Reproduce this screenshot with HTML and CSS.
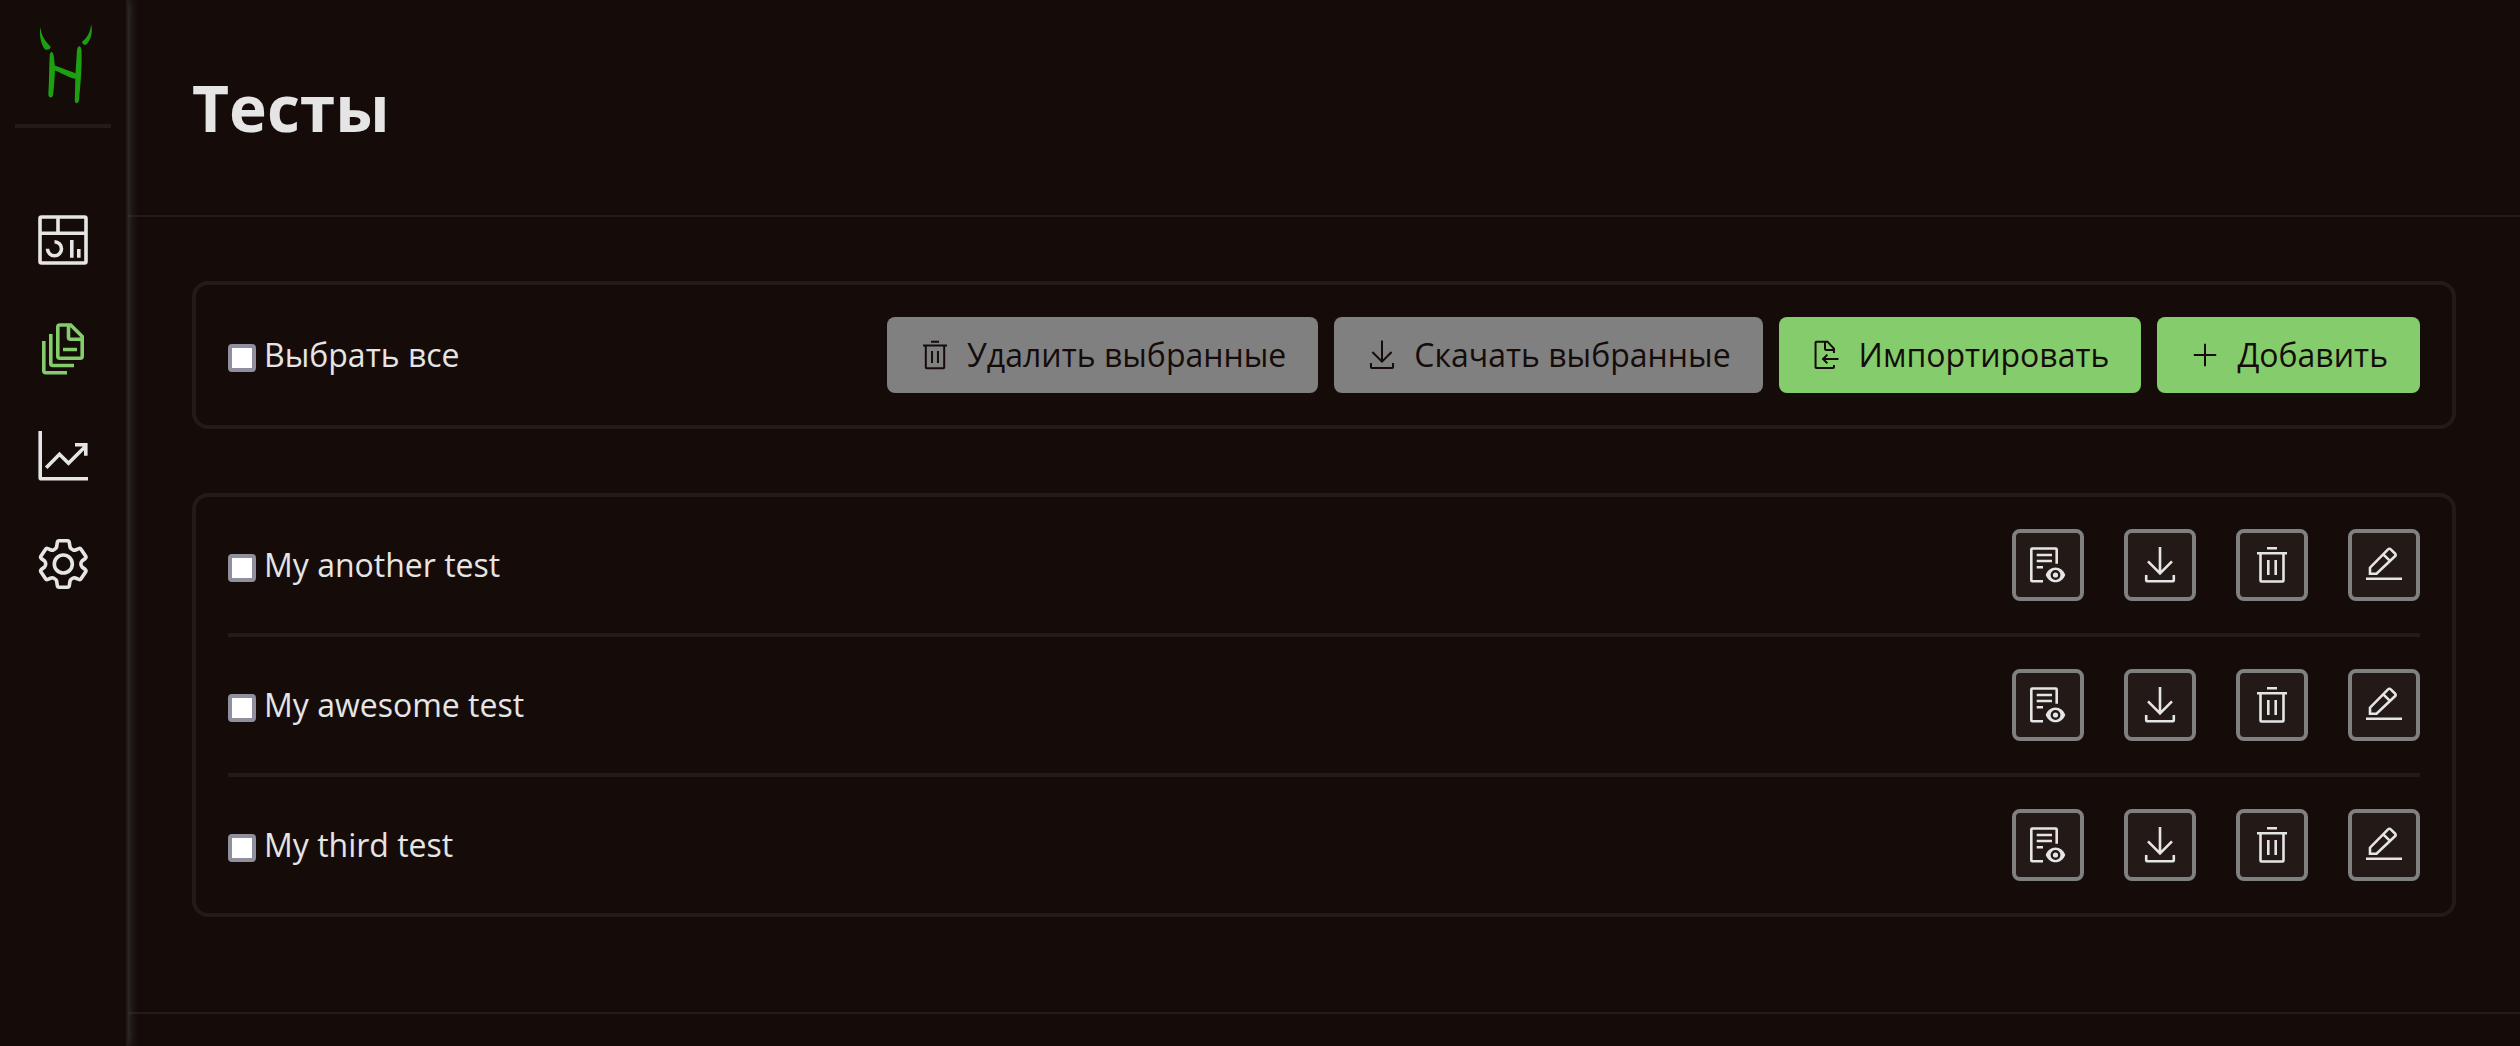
FILE: index.html
```html
<!DOCTYPE html>
<html lang="ru">
<head>
<meta charset="utf-8">
<title>Тесты</title>
<link rel="stylesheet" href="styles.css">
</head>
<body>
<svg class="sprite" aria-hidden="true">
  <symbol id="trash" viewBox="0 0 40 40"><path d="M15 3.3H25M5 8.2H35M8.5 8.2V35.5a1 1 0 0 0 1 1H30.500a1 1 0 0 0 1-1V8.200M16.300 15V30M23.700 15V30"/></symbol>
  <symbol id="download" viewBox="0 0 40 40"><path d="M20 2V28.300M8 16.300L20 28.300L32 16.300M6.200 30V35.300a1 1 0 0 0 1 1H32.800a1 1 0 0 0 1-1V30"/></symbol>
  <symbol id="preview" viewBox="0 0 40 40"><path d="M28.700 18.700V4.500a1 1 0 0 0-1-1H4.300a1 1 0 0 0-1 1V35.300a1 1 0 0 0 1 1H15M8.700 10H24M8.700 16H24M8.700 22.300H15"/><path class="solid" fill-rule="evenodd" d="M17.700 30C19.500 25.500 23 22.600 27.500 22.600S35.500 25.500 37.300 30C35.500 34.500 32 37.300 27.500 37.300S19.500 34.500 17.700 30ZM27.500 25.100a4.900 4.900 0 1 0 0 9.800a4.900 4.900 0 1 0 0-9.800Z"/><circle class="solid" cx="27.500" cy="30" r="2.600"/></symbol>
  <symbol id="edit" viewBox="0 0 40 40"><path d="M2 33.700H38M6 28.700V22.700L24.300 4.200a1.500 1.500 0 0 1 2.200 0L31.200 8.800a1.500 1.500 0 0 1 0 2.200L12.500 28.700ZM19.300 9.300L25.700 15.700"/></symbol>
  <symbol id="import" viewBox="0 0 40 40"><path d="M28.700 17.500V12L20.600 3.300H6.700a1 1 0 0 0-1 1V35.200a1 1 0 0 0 1 1H27.700a1 1 0 0 0 1-1V32.500M17.500 3.300V12.600a1 1 0 0 0 1 1H28.700M34.400 25H15M20.500 19.500L15 25L20.500 30.500"/></symbol>
  <symbol id="plus" viewBox="0 0 40 40"><path d="M20 6V34M6 20H34"/></symbol>
</svg>

<aside class="sidebar">
  <a class="logo" href="#" aria-label="На главную">
    <svg viewBox="31 16 64 96">
      <path d="M40.500 27C41 36 46 42 50.500 46.500C51 49 49 50 45 49.500C42 46 38.500 36 40.500 27Z"/>
      <path d="M91.300 24.500C89.500 34 87 38 82.200 41.500C82 44 84 45.500 86.500 44.500C91.500 39 92.500 32 91.300 24.500Z"/>
      <path d="M52 52C54 53 54.200 60 54.800 65.500L75.500 73.200L77 50C77.800 45 81 45 81.500 50C82.300 66 80.500 84 79 100C78 104.500 74.500 104 74.800 100L75.300 78.800C68 77.500 62 73 55 70.500C54.500 80 54 88 53 95.500C52 98.500 48.500 98 48.300 94.500C49.300 81 49 70 49.700 56C49.800 53 50.500 52 52 52Z"/>
    </svg>
  </a>
  <nav class="menu">
    <a href="#" aria-label="Панель"><svg viewBox="0 0 60 60"><rect x="7" y="7" width="46" height="46" rx="1.500"/><path d="M7 23.300H53M25 7V23.300M21.500 31.700A7 7 0 1 1 14.500 38.700M38.800 30V47.700M45.800 39V47.700"/></svg></a>
    <a class="current" href="#" aria-label="Тесты"><svg viewBox="0 0 60 60"><path d="M37.700 7H26.800a2 2 0 0 0-2 2V38.200a2 2 0 0 0 2 2H47.200a2 2 0 0 0 2-2V18.500ZM35.500 7V19.200a2 2 0 0 0 2 2H49.200M30 31.500H44M17.800 16V45.500a2 2 0 0 0 2 2H41M10.800 23V52.800a2 2 0 0 0 2 2H34"/></svg></a>
    <a href="#" aria-label="Статистика"><svg viewBox="0 0 60 60"><path d="M7.200 5V51.800a1 1 0 0 0 1 1H55M13.200 41.700L26.500 28.300L35.500 37.300L52.800 20M42 18.800H52.800V29.700"/></svg></a>
    <a href="#" aria-label="Настройки"><svg viewBox="0 0 60 60"><circle cx="30.300" cy="30" r="9"/><path d="M26.200 6.700H34.400Q36 6.700 36.300 8.500L37 13Q37.300 14.300 38.600 15L40.200 16Q41.200 16.600 42.500 16L45.800 14.600Q47.300 14 48.200 15.500L52.700 22.200Q53.400 23.500 52.300 24.500L49 27Q47.900 28 47.900 30T49 33L52.300 35.500Q53.400 36.500 52.700 37.800L48.200 44.500Q47.300 46 45.800 45.400L42.500 44Q41.200 43.400 40.200 44L38.600 45Q37.300 45.700 37 47L36.300 51.500Q36 53.300 34.400 53.300H26.200Q24.600 53.300 24.300 51.500L23.600 47Q23.300 45.700 22 45L20.400 44Q19.400 43.400 18.100 44L14.800 45.400Q13.300 46 12.400 44.500L7.900 37.800Q7.200 36.500 8.300 35.500L11.600 33Q12.700 32 12.700 30T11.600 27L8.300 24.500Q7.200 23.500 7.900 22.200L12.400 15.500Q13.300 14 14.800 14.600L18.100 16Q19.400 16.600 20.400 16L22 15Q23.300 14.300 23.600 13L24.300 8.500Q24.600 6.700 26.200 6.700Z"/></svg></a>
  </nav>
</aside>

<div class="page">
  <header class="header"><h1>Тесты</h1></header>
  <main class="content">
    <section class="card toolbar">
      <label class="check"><input type="checkbox">Выбрать все</label>
      <div class="buttons">
        <button class="button" type="button" disabled><svg><use href="#trash"/></svg>Удалить выбранные</button>
        <button class="button" type="button" disabled><svg><use href="#download"/></svg>Скачать выбранные</button>
        <button class="button" type="button"><svg><use href="#import"/></svg>Импортировать</button>
        <button class="button" type="button"><svg><use href="#plus"/></svg>Добавить</button>
      </div>
    </section>
    <ul class="card tests">
      <li class="test">
        <label class="check"><input type="checkbox">My another test</label>
        <div class="actions">
          <button class="action" type="button" aria-label="Просмотр"><svg><use href="#preview"/></svg></button>
          <button class="action" type="button" aria-label="Скачать"><svg><use href="#download"/></svg></button>
          <button class="action" type="button" aria-label="Удалить"><svg><use href="#trash"/></svg></button>
          <button class="action" type="button" aria-label="Изменить"><svg><use href="#edit"/></svg></button>
        </div>
      </li>
      <li class="test">
        <label class="check"><input type="checkbox">My awesome test</label>
        <div class="actions">
          <button class="action" type="button" aria-label="Просмотр"><svg><use href="#preview"/></svg></button>
          <button class="action" type="button" aria-label="Скачать"><svg><use href="#download"/></svg></button>
          <button class="action" type="button" aria-label="Удалить"><svg><use href="#trash"/></svg></button>
          <button class="action" type="button" aria-label="Изменить"><svg><use href="#edit"/></svg></button>
        </div>
      </li>
      <li class="test">
        <label class="check"><input type="checkbox">My third test</label>
        <div class="actions">
          <button class="action" type="button" aria-label="Просмотр"><svg><use href="#preview"/></svg></button>
          <button class="action" type="button" aria-label="Скачать"><svg><use href="#download"/></svg></button>
          <button class="action" type="button" aria-label="Удалить"><svg><use href="#trash"/></svg></button>
          <button class="action" type="button" aria-label="Изменить"><svg><use href="#edit"/></svg></button>
        </div>
      </li>
    </ul>
  </main>
  <footer class="footer"></footer>
</div>
</body>
</html>
```
FILE: styles.css
```css
:root {
  --bg: #150c0a;
  --line: #241b19;
  --text: #e5e5e5;
  --green: #84cc6c;
  --gray: #808080;
}

* { box-sizing: border-box; }

body {
  margin: 0;
  min-height: 100vh;
  display: flex;
  background: var(--bg);
  color: var(--text);
  font: 32px/44px "Open Sans", "Noto Sans", sans-serif;
}

button { font: inherit; }
svg { display: block; fill: none; stroke: currentColor; }
.sprite { display: none; }
.solid { fill: currentColor; stroke: none; }

.sidebar {
  flex: none;
  width: 128px;
  padding: 16px 15px;
  border-right: 2px solid var(--line);
  box-shadow: 0 0 10px #474540;
  z-index: 1;
}

.logo {
  display: flex;
  justify-content: center;
  padding-bottom: 12px;
  border-bottom: 4px solid var(--line);
}
.logo svg { width: 64px; height: 96px; fill: #1ca012; stroke: none; }

.menu {
  margin-top: 82px;
  display: flex;
  flex-direction: column;
  align-items: center;
  gap: 48px;
}
.menu a { color: var(--text); }
.menu .current { color: var(--green); }
.menu svg { width: 60px; height: 60px; stroke-width: 3.6; }

.page {
  flex: 1;
  min-width: 0;
  display: flex;
  flex-direction: column;
}

.header {
  padding: 64px;
  border-bottom: 2px solid var(--line);
}
.header h1 { margin: 0; font-size: 64px; line-height: 87px; }

.content {
  flex: 1;
  padding: 64px;
  display: flex;
  flex-direction: column;
  gap: 64px;
}

.card {
  margin: 0;
  padding: 0 32px;
  border: 4px solid var(--line);
  border-radius: 16px;
  list-style: none;
}

.toolbar, .test {
  display: flex;
  align-items: center;
  justify-content: space-between;
  padding-block: 32px;
}
.test + .test { border-top: 4px solid var(--line); }

.check { display: flex; align-items: center; gap: 8px; }
.check input {
  appearance: none;
  width: 28px;
  height: 28px;
  margin: 6px 0 0;
  border: 4px solid #8f8f9d;
  border-radius: 4px;
  background: #fff;
}

.buttons { display: flex; gap: 16px; }
.button {
  display: flex;
  align-items: center;
  gap: 16px;
  padding: 16px 32px;
  border: 0;
  border-radius: 8px;
  background: var(--green);
  color: var(--bg);
}
.button:disabled { background: var(--gray); }
.button svg { width: 32px; height: 32px; stroke-width: 2.5; }

.actions { display: flex; gap: 40px; }
.action {
  padding: 12px;
  border: 4px solid var(--gray);
  border-radius: 8px;
  background: #231a18;
  color: var(--text);
}
.action svg { width: 40px; height: 40px; stroke-width: 2.6; }

.footer { height: 34px; border-top: 2px solid var(--line); }
```
